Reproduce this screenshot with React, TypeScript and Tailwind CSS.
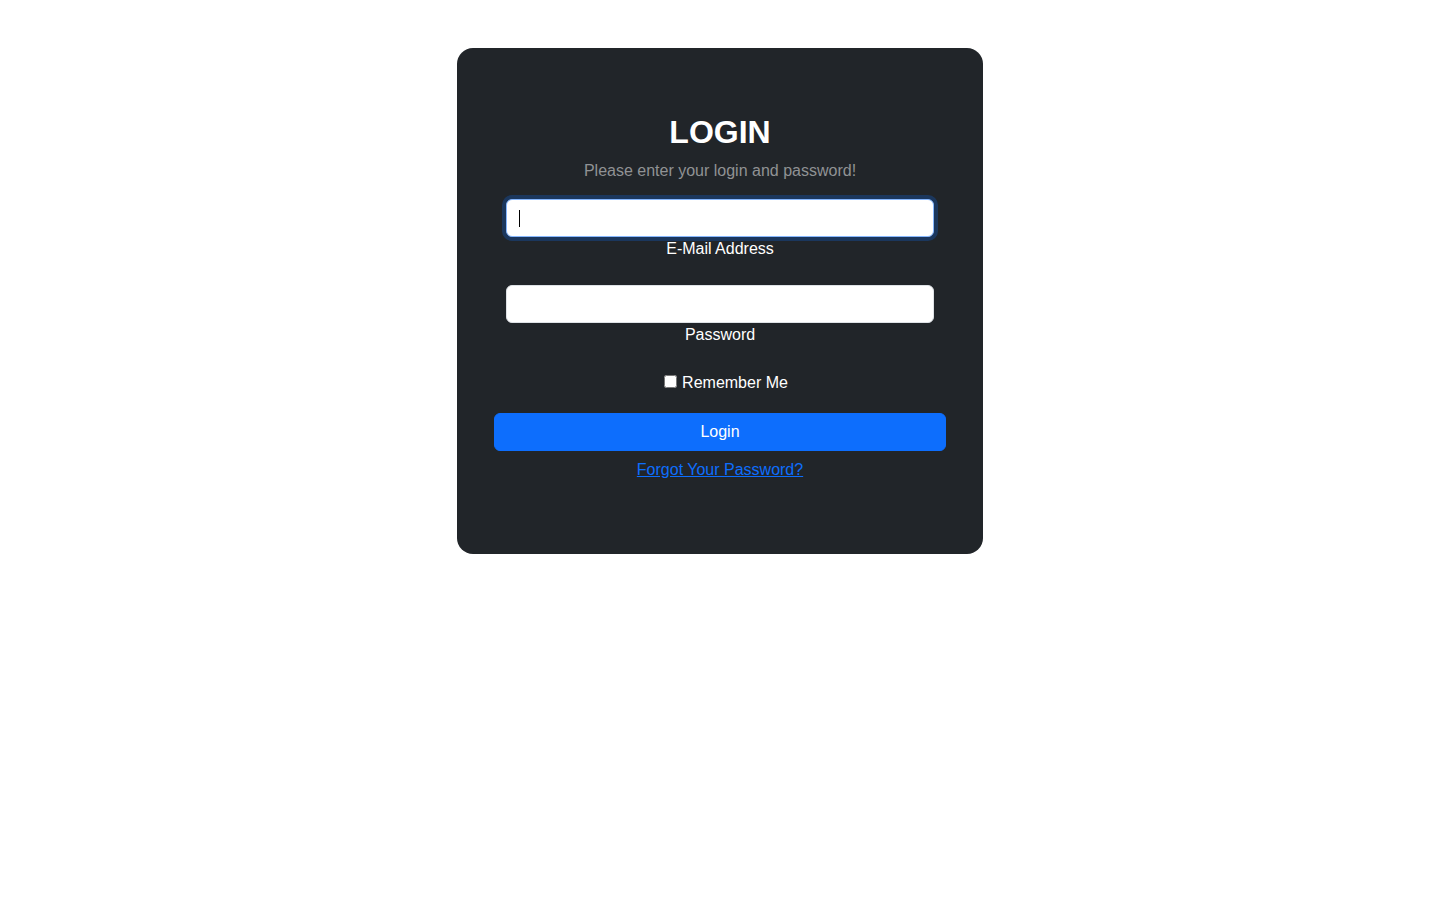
import React from "react";

export default function App() {
  return (
    <div
      className="min-h-[900px] w-full bg-white pt-12"
      style={{ fontFamily: '"Liberation Sans", Arial, sans-serif' }}
    >
      <div className="mx-auto w-[526px] rounded-2xl bg-[#212529] px-[37px] pt-[65px] pb-[72px] text-center text-white">
        <h2 className="mb-2 text-[32px] font-bold leading-[1.2]">LOGIN</h2>
        <p className="mb-4 text-base leading-6 text-[#909294]">
          Please enter your login and password!
        </p>

        <div className="mx-3 mb-6">
          <div className="relative">
            <input
              type="email"
              className="block h-[38px] w-full rounded-[6px] border border-[#86b7fe] bg-white px-3 py-1.5 text-base text-[#212529] shadow-[0_0_0_4px_rgba(13,110,253,0.25)] outline-none"
            />
            <span className="pointer-events-none absolute left-[13px] top-[11px] h-[17px] w-px bg-black" />
          </div>
          <label className="block text-base leading-6 text-white">E-Mail Address</label>
        </div>

        <div className="mx-3 mb-6">
          <input
            type="password"
            className="block h-[38px] w-full rounded-[6px] border border-[#dee2e6] bg-white px-3 py-1.5 text-base text-[#212529] outline-none"
          />
          <label className="block text-base leading-6 text-white">Password</label>
        </div>

        <div className="flex h-6 items-center justify-center pl-3">
          <input type="checkbox" className="m-0 mb-[4px] h-[13px] w-[13px]" />
          <span className="ml-[5px] text-base leading-6">Remember Me</span>
        </div>

        <button className="mt-[18px] block h-[38px] w-full rounded-[6px] border border-[#0d6efd] bg-[#0d6efd] text-base leading-6 text-white">
          Login
        </button>

        <div className="mt-[7px]">
          <a href="#" className="text-base leading-6 text-[#0d6efd] underline">
            Forgot Your Password?
          </a>
        </div>
      </div>
    </div>
  );
}
